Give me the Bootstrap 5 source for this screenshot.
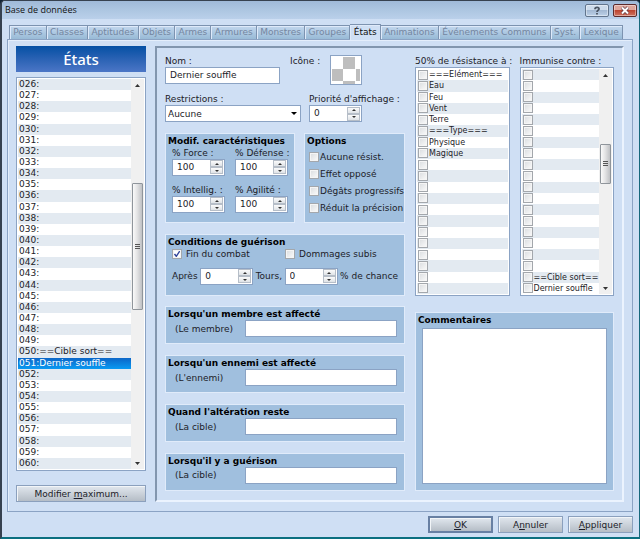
<!DOCTYPE html>
<html lang="fr">
<head>
<meta charset="utf-8">
<meta name="viewport" content="width=device-width, initial-scale=1">
<title>Base de données</title>
<link href="https://cdn.jsdelivr.net/npm/bootstrap@5.3.0/dist/css/bootstrap.min.css" rel="stylesheet">
<style>
  :root { --face: #cfdff4; --edge: #8ba3c4; --group: #a0bfde; --stripe: #e3eaf1; }
  body { font: 9px/12px "DejaVu Sans", sans-serif; color: #1c1c28; background: #123; }
  button, input, select, textarea { font: inherit; color: inherit; border-radius: 0; }
  .window { background: var(--face); border: solid #36414f; border-width: 1px 1px 2px 2px; border-right-color: #17687c; border-bottom-color: #0b6f80; border-radius: 5px 5px 0 0; }
  .titlebar { height: 18px; padding: 0 2px 0 3px; background: linear-gradient(#9fb9d8, #adc6e1 50%, #bad0ea); border-radius: 4px 4px 0 0; font: 9px/18px "Open Sans", sans-serif; color: #111; }
  .caption-btn { width: 24px; height: 13px; padding: 0; border: 1px solid #62758d; border-radius: 2px; background: linear-gradient(#cddbeb 45%, #a3b9d3 50%, #bdd1e8); box-shadow: inset 0 0 0 1px #ffffff66; }
  .caption-btn.quit { border-color: #5c2a2b; background: linear-gradient(#dfa69b 45%, #bd4430 50%, #cf7360); }
  .caption-btn svg { width: 10px; height: 9px; }
  .body-area { padding: 5px 6px 4px 5px; }

  .tabstrip { padding: 0 10px 0 2px; }
  .tabstrip button { height: 14px; padding: 0; line-height: 13px; color: #7486a0; border: 1px solid #7d93b0; border-width: 1px 1px 0 0; box-shadow: inset 1px 1px #dfeafa; background: linear-gradient(#c3d7ee, #a5c3dd 70%, #98bad6); }
  .tabstrip button:first-child { border-left-width: 1px; }
  .tabstrip button.current { height: 16px; margin-bottom: -1px; color: #111; background: var(--face); position: relative; }
  .tabpage { border: 1px solid var(--edge); box-shadow: inset 1px 1px #e4eefb; padding: 6px 8px 9px; column-gap: 9px; }

  .side { width: 130px; row-gap: 0; }
  .banner { height: 26px; margin: 0 0 5px; color: #fff; background: linear-gradient(#0450a4, #2a62b4 50%, #4b76c6); font: 500 15px/26px "Noto Sans", sans-serif; }
  .push { height: 17px; padding: 0; line-height: 14px; border: 1px solid #8ba0bd; background: linear-gradient(#e1e7ee, #cbd2da 50%, #b5bdc6); box-shadow: inset 1px 1px #f2f5f8; }
  .push.main { border: 2px solid #6880a3; line-height: 12px; }
  .side .push { margin-top: 14px; }

  .listbox { border: 1px solid var(--edge); background: #fff; padding: 1px; }
  .listbox ul { list-style: none; margin: 0; padding: 0; min-width: 0; }
  .listbox li { flex: 1 1 11px; line-height: 11px; white-space: nowrap; overflow: hidden; display: flex; align-items: center; padding-left: 1px; }
  .odd-stripes li:nth-child(odd), .even-stripes li:nth-child(even) { background: var(--stripe); }
  .listbox li[aria-selected=true] { color: #fff; background: linear-gradient(#0b66c8, #0a9af2); }
  .listbox li label { flex: 1; height: 11px; padding-left: 1px; font-size: 8px; }
  .vbar { width: 13px; background: #f0f0f0; }
  .vbar button { height: 12px; padding: 0; border: 0; background: none; display: flex; align-items: center; justify-content: center; }
  .vbar svg { width: 5px; height: 3px; }
  .thumb { margin: 0 1px; border: 1px solid #8f959b; border-radius: 1px; background: linear-gradient(90deg, #fafafa, #e4e4e5 45%, #bfc1c4); }
  .grip { width: 5px; height: 6px; background: repeating-linear-gradient(#555 0 1px, transparent 1px 2px); }

  .sheet { min-width: 0; border: 2px solid; border-color: #8296ae #ebf3fe #ebf3fe #8296ae; padding: 7px 8px 9px 8px; column-gap: 10px; }
  .left-part { width: 240px; }
  .right-part, .lists > .col { min-width: 0; }
  .field { height: 17px; border: 1px solid var(--edge); background: #fff; padding: 0 4px 1px; min-width: 0; }
  .name-row { column-gap: 10px; }
  .w-name { width: 115px; }
  .w-choice { width: 136px; }
  .choice { appearance: none; padding: 0 12px 0 2px; background: #fff url("data:image/svg+xml,%3Csvg xmlns='http://www.w3.org/2000/svg' viewBox='0 0 6 3'%3E%3Cpath d='M0 0h6L3 3z'/%3E%3C/svg%3E") no-repeat right 3px center / 6px 3px; }
  .iconbox { width: 32px; height: 30px; padding: 0; border: 1px solid var(--edge); background: #fff; }
  .iconbox svg { display: block; width: 30px; height: 28px; }
  .spin { width: 53px; height: 17px; border: 1px solid var(--edge); background: #fff; padding: 0 1px 0 0; }
  .spin input { width: 36px; border: 0; padding: 0 0 1px 4px; background: none; outline: 0; }
  .spin button { width: 13px; height: 7px; padding: 0; border: 1px solid #b6bec8; background: linear-gradient(#fbfbfb, #dfe3e7); display: flex; align-items: center; justify-content: center; }
  .spin svg { width: 4px; height: 2px; }

  .group { border: 1px solid #e0ebfa; background: var(--group); padding: 1px 6px 0; margin: 0; min-width: 0; }
  .group h2 { font: bold 9px/12px "DejaVu Sans", sans-serif; color: #000; margin: 0 -4px; white-space: nowrap; }
  .g-stats { width: 130px; height: 90px; }
  .g-stats .pair { column-gap: 10px; }
  .g-options { width: 101px; height: 90px; }
  .g-options .choices { row-gap: 5px; }
  .g-options .tick { margin: 0 1px 0 -2px; }
  .g-cond { height: 62px; }
  .g-event { height: 38px; padding: 1px 7px 0 9px; }
  .g-event h2 { margin-left: -7px; }
  .g-event .field { width: 152px; }
  .tick { appearance: none; flex: none; width: 10px; height: 10px; margin: 0; border: 1px solid #a3a7ac; background: linear-gradient(135deg, #d9dcdf, #fbfbfb); box-shadow: inset 0 0 0 1px #f5f5f5; }
  .tick:checked { background: #fff url("data:image/svg+xml,%3Csvg xmlns='http://www.w3.org/2000/svg' viewBox='0 0 8 8'%3E%3Cpath d='M1.5 4 3.3 6.3 6.7 1.2' fill='none' stroke='%2331449a' stroke-width='1.4'/%3E%3C/svg%3E"); }
  .nowrap { white-space: nowrap; }
  .stat-col { width: 53px; }
  .remarks { height: 156px; resize: none; border: 1px solid var(--edge); background: #fff; display: block; margin: 2px 0 6px; }
  .lists { column-gap: 10px; }
  .footer-btns { padding-top: 4px; column-gap: 5px; }
  .footer-btns button { width: 65px; }
</style>
<script src="https://cdn.jsdelivr.net/npm/bootstrap@5.3.0/dist/js/bootstrap.bundle.min.js"></script>
</head>
<body>
<svg class="d-none" xmlns="http://www.w3.org/2000/svg">
  <symbol id="up" viewBox="0 0 6 3" preserveAspectRatio="none"><path d="M0 3h6L3 0z" fill="#333"/></symbol>
  <symbol id="down" viewBox="0 0 6 3" preserveAspectRatio="none"><path d="M0 0h6L3 3z" fill="#333"/></symbol>
</svg>
<div class="window d-flex flex-column min-vh-100">
  <header class="titlebar d-flex align-items-center">
    <span class="me-auto">Base de données</span>
    <button class="caption-btn d-flex align-items-center justify-content-center me-1" aria-label="Aide"><svg viewBox="0 0 10 9"><path d="M3 3.2C3 .8 7.2.9 7 3 6.9 4.3 5 4.2 5 6M5 7v1.5" fill="none" stroke="#4b5563" stroke-width="1.8"/></svg></button>
    <button class="caption-btn quit d-flex align-items-center justify-content-center" aria-label="Fermer"><svg viewBox="0 0 10 9"><path d="m2 1.5 6 6m0-6-6 6" stroke="#5b3540" stroke-width="3.2"/><path d="m2 1.5 6 6m0-6-6 6" stroke="#fff" stroke-width="2"/></svg></button>
  </header>

  <div class="body-area d-flex flex-column flex-grow-1">
    <nav class="tabstrip d-flex align-items-end" role="tablist">
      <button class="flex-fill" role="tab">Persos</button>
      <button class="flex-fill" role="tab">Classes</button>
      <button class="flex-fill" role="tab">Aptitudes</button>
      <button class="flex-fill" role="tab">Objets</button>
      <button class="flex-fill" role="tab">Armes</button>
      <button class="flex-fill" role="tab">Armures</button>
      <button class="flex-fill" role="tab">Monstres</button>
      <button class="flex-fill" role="tab">Groupes</button>
      <button class="flex-fill current" role="tab" aria-selected="true">États</button>
      <button class="flex-fill" role="tab">Animations</button>
      <button class="flex-fill" role="tab">Événements Communs</button>
      <button class="flex-fill" role="tab">Syst.</button>
      <button class="flex-fill" role="tab">Lexique</button>
    </nav>

    <main class="tabpage d-flex flex-grow-1">
      <aside class="side d-flex flex-column flex-shrink-0">
        <h1 class="banner text-center">États</h1>
        <div class="listbox d-flex flex-grow-1">
          <ul id="states" class="odd-stripes d-flex flex-column flex-grow-1" role="listbox" aria-label="États"></ul>
          <div class="vbar d-flex flex-column">
            <button aria-label="Monter"><svg><use href="#up"/></svg></button>
            <div class="run d-flex flex-column flex-grow-1" data-parts="93,126,148"></div>
            <button aria-label="Descendre"><svg><use href="#down"/></svg></button>
          </div>
        </div>
        <button class="push">Modifier <u>m</u>aximum...</button>
      </aside>

      <section class="sheet d-flex flex-grow-1">
        <div class="left-part d-flex flex-column justify-content-between flex-shrink-0">
          <div>
            <div class="d-flex name-row">
              <div class="w-name">
                <label class="d-block" for="nom">Nom :</label>
                <input class="field w-100 d-block" id="nom" value="Dernier souffle">
              </div>
              <span class="nowrap">Icône :</span>
              <button class="iconbox" aria-label="Choisir l'icône"><svg viewBox="0 0 30 28"><path fill="#bebebe" d="M12 1h12v12H12zM1 13h11v12H1zM25 13h4v12h-4zM12 25h12v3H12z"/></svg></button>
            </div>
            <div class="d-flex pt-2">
              <div class="w-choice me-2">
                <label class="d-block" for="restr">Restrictions :</label>
                <select class="field choice w-100 d-block" id="restr"><option>Aucune</option></select>
              </div>
              <div>
                <label class="d-block nowrap" for="prio">Priorité d'affichage :</label>
                <div class="spin" data-id="prio" data-value="0"></div>
              </div>
            </div>
          </div>

          <div class="d-flex justify-content-between">
            <section class="group g-stats">
              <h2>Modif. caractéristiques</h2>
              <div class="d-flex pair">
                <div class="stat-col"><label class="d-block nowrap" for="force">% Force :</label><div class="spin" data-id="force" data-value="100"></div></div>
                <div class="stat-col"><label class="d-block nowrap" for="defense">% Défense :</label><div class="spin" data-id="defense" data-value="100"></div></div>
              </div>
              <div class="d-flex pair pt-2">
                <div class="stat-col"><label class="d-block nowrap" for="intel">% Intellig. :</label><div class="spin" data-id="intel" data-value="100"></div></div>
                <div class="stat-col"><label class="d-block nowrap" for="agil">% Agilité :</label><div class="spin" data-id="agil" data-value="100"></div></div>
              </div>
            </section>
            <section class="group g-options">
              <h2>Options</h2>
              <div class="choices d-grid pt-1">
                <label class="d-flex align-items-center nowrap"><input type="checkbox" class="tick">Aucune résist.</label>
                <label class="d-flex align-items-center nowrap"><input type="checkbox" class="tick">Effet opposé</label>
                <label class="d-flex align-items-center nowrap"><input type="checkbox" class="tick">Dégâts progressifs</label>
                <label class="d-flex align-items-center nowrap"><input type="checkbox" class="tick">Réduit la précision</label>
              </div>
            </section>
          </div>

          <section class="group g-cond">
            <h2>Conditions de guérison</h2>
            <div class="row g-0">
              <label class="col-6 d-flex align-items-center"><input type="checkbox" class="tick me-1" checked>Fin du combat</label>
              <label class="col-6 d-flex align-items-center"><input type="checkbox" class="tick me-1">Dommages subis</label>
            </div>
            <div class="d-flex align-items-center justify-content-between nowrap pt-2">
              <label for="tours">Après</label><div class="spin" data-id="tours" data-value="0"></div>
              <label for="chance">Tours,</label><div class="spin" data-id="chance" data-value="0"></div>
              <span>% de chance</span>
            </div>
          </section>

          <section class="group g-event">
            <h2>Lorsqu'un membre est affecté</h2>
            <div class="d-flex align-items-center justify-content-between"><label for="membre">(Le membre)</label><input class="field" id="membre"></div>
          </section>
          <section class="group g-event">
            <h2>Lorsqu'un ennemi est affecté</h2>
            <div class="d-flex align-items-center justify-content-between"><label for="ennemi">(L'ennemi)</label><input class="field" id="ennemi"></div>
          </section>
          <section class="group g-event">
            <h2>Quand l'altération reste</h2>
            <div class="d-flex align-items-center justify-content-between"><label for="reste">(La cible)</label><input class="field" id="reste"></div>
          </section>
          <section class="group g-event">
            <h2>Lorsqu'il y a guérison</h2>
            <div class="d-flex align-items-center justify-content-between"><label for="guerison">(La cible)</label><input class="field" id="guerison"></div>
          </section>
        </div>

        <div class="right-part d-flex flex-column flex-grow-1">
          <div class="lists row g-0 flex-nowrap flex-grow-1">
            <div class="col d-flex flex-column">
              <span class="nowrap">50% de résistance à :</span>
              <div class="listbox d-flex flex-grow-1"><ul id="resist" class="even-stripes d-flex flex-column flex-grow-1"></ul></div>
            </div>
            <div class="col d-flex flex-column">
              <span class="nowrap">Immunise contre :</span>
              <div class="listbox d-flex flex-grow-1">
                <ul id="immune" class="odd-stripes d-flex flex-column flex-grow-1"></ul>
                <div class="vbar d-flex flex-column flex-shrink-0">
                  <button aria-label="Monter"><svg><use href="#up"/></svg></button>
                  <div class="run d-flex flex-column flex-grow-1" data-parts="63,38,98"></div>
                  <button aria-label="Descendre"><svg><use href="#down"/></svg></button>
                </div>
              </div>
            </div>
          </div>
          <section class="group mt-3">
            <h2><label for="remarks">Commentaires</label></h2>
            <textarea class="remarks w-100" id="remarks"></textarea>
          </section>
        </div>
      </section>
    </main>

    <footer class="footer-btns d-flex justify-content-end">
      <button class="push main"><u>O</u>K</button>
      <button class="push">A<u>n</u>nuler</button>
      <button class="push"><u>A</u>ppliquer</button>
    </footer>
  </div>
</div>

<script>
  const states = { 50: '==Cible sort==', 51: 'Dernier souffle' };
  let rows = '';
  for (let n = 26; n <= 60; n++)
    rows += `<li role="option" aria-selected="${n === 51}">0${n}:${states[n] || ''}</li>`;
  document.getElementById('states').innerHTML = rows;

  const fill = (id, names) => document.getElementById(id).innerHTML = names.map((name, i) =>
    `<li><input type="checkbox" class="tick" id="${id}${i}"><label for="${id}${i}">${name}</label></li>`).join('');
  fill('resist', ['===Elément===', 'Eau', 'Feu', 'Vent', 'Terre', '===Type===', 'Physique', 'Magique', ...Array(12).fill('')]);
  fill('immune', [...Array(18).fill(''), '==Cible sort==', 'Dernier souffle']);

  document.querySelectorAll('.spin').forEach(s => {
    s.classList.add('d-flex', 'align-items-center', 'justify-content-between');
    s.innerHTML = `<input id="${s.dataset.id}" inputmode="numeric" value="${s.dataset.value}"><div>
      <button aria-label="Augmenter"><svg><use href="#up"/></svg></button>
      <button aria-label="Diminuer"><svg><use href="#down"/></svg></button></div>`;
  });
  document.querySelectorAll('.run').forEach(r => {
    const [before, size, after] = r.dataset.parts.split(',');
    r.innerHTML = `<div style="flex:${before} 0 0"></div>
      <div class="thumb d-flex align-items-center justify-content-center" style="flex:${size} 0 0"><div class="grip"></div></div>
      <div style="flex:${after} 0 0"></div>`;
  });
</script>
</body>
</html>
